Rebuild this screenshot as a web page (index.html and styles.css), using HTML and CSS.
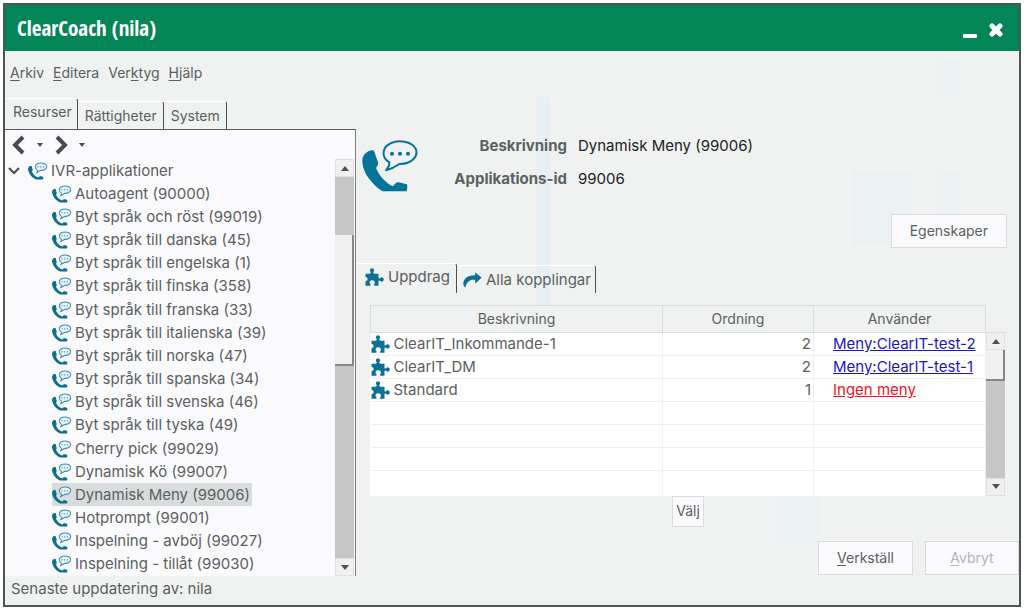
FILE: index.html
```
<!DOCTYPE html>
<html lang="sv">
<head>
<meta charset="utf-8">
<meta name="viewport" content="width=device-width, initial-scale=1">
<title>ClearCoach (nila)</title>
<link rel="stylesheet" href="styles.css">
</head>
<body>
<svg class="defs" aria-hidden="true">
  <symbol id="phone" viewBox="36 60 168 154">
    <path d="M66 90C54 92 42 100 38 112C34 134 44 160 60 178C72 194 86 206 98 213H170Q173 202 171 192L146 186Q140 185 136 190L129 198C110 190 88 168 78 142L82 136Q86 132 84 126L73 94Q71 89 66 90Z" fill="#04749a"/>
    <path d="M118 126C95 112 94 84 120 70C146 57 185 63 197 85C207 108 184 132 148 131Q130 144 108 150Q119 139 118 126Z" fill="none" stroke="#04749a" stroke-width="6" stroke-linejoin="round"/>
    <circle cx="126" cy="100" r="6" fill="#04749a"/><circle cx="150" cy="100" r="6" fill="#04749a"/><circle cx="174" cy="100" r="6" fill="#04749a"/>
  </symbol>
  <symbol id="phone-small" viewBox="0 0 56 52">
    <path d="M6 11C2 12 0 16 0 21C2 35 12 46 24 51H44Q47 47 44 43L35 41L31 45C23 43 15 36 12 28L14 24L11 12Q10 9 6 11Z" fill="#0b6f8f"/>
    <path d="M28 24C18 18 20 6 32 3C44 1 55 5 55 12C55 21 45 25 38 24L25 31Q29 28 28 24Z" fill="#e6f3f8" stroke="#3d8fae" stroke-width="3" stroke-linejoin="round"/>
    <path d="M28 14H31M36 14H39M44 14H47" stroke="#3d8fae" stroke-width="4"/>
  </symbol>
  <symbol id="puzzle" viewBox="0 0 56 54">
    <path d="M1 17H13Q17 17 17 13Q14 10 14 7Q15 1 20 1Q26 1 27 7Q27 10 24 13Q24 17 28 17H40V30Q43 33 45 30Q47 27 51 28Q56 30 56 35Q55 40 50 41Q47 41 45 38Q42 36 40 39V53H27V48Q30 45 29 41Q26 37 20 37Q14 38 13 42Q13 46 16 48V53H1V40Q5 39 7 36Q8 31 5 28Q3 27 1 27Z" fill="#0b7196"/>
  </symbol>
  <symbol id="share" viewBox="0 0 56 48">
    <path d="M36 1L55 17L36 34V24C22 22 12 27 7 46Q3 44 1 38C0 20 14 9 36 10Z" fill="#0b7196"/>
  </symbol>
</svg>
<div class="window">
  <header class="titlebar">
    <h1 class="title">ClearCoach (nila)</h1>
    <button class="win-btn" type="button" aria-label="Minimera"><svg width="14" height="22" viewBox="0 0 14 22"><rect y="17" width="14" height="4" rx="1" fill="#fff"/></svg></button>
    <button class="win-btn close" type="button" aria-label="Stäng"><svg width="14" height="14" viewBox="0 0 14 14"><path d="M3 3L11 11M11 3L3 11" stroke="#fff" stroke-width="5" stroke-linecap="round"/></svg></button>
  </header>
  <nav class="menu">
    <button type="button"><u>A</u>rkiv</button>
    <button type="button"><u>E</u>ditera</button>
    <button type="button">Ver<u>k</u>tyg</button>
    <button type="button"><u>H</u>jälp</button>
  </nav>
  <main class="main">
    <section class="left">
      <div class="tabs" role="tablist">
        <button class="tab active" type="button" role="tab" aria-selected="true">Resurser</button>
        <button class="tab" type="button" role="tab">Rättigheter</button>
        <button class="tab" type="button" role="tab">System</button>
      </div>
      <div class="panel">
        <div class="history">
          <button type="button" aria-label="Bakåt"><svg width="14" height="20" viewBox="0 0 14 20"><path d="M11 2L3 10L11 18" fill="none" stroke="#464c4c" stroke-width="4"/></svg></button>
          <button type="button" aria-label="Bakåthistorik"><svg width="6" height="4" viewBox="0 0 6 4"><path d="M0 0H6L3 4Z" fill="#464c4c"/></svg></button>
          <button type="button" aria-label="Framåt"><svg width="14" height="20" viewBox="0 0 14 20"><path d="M3 2L11 10L3 18" fill="none" stroke="#464c4c" stroke-width="4"/></svg></button>
          <button type="button" aria-label="Framåthistorik"><svg width="6" height="4" viewBox="0 0 6 4"><path d="M0 0H6L3 4Z" fill="#464c4c"/></svg></button>
        </div>
        <div class="tree-box">
          <ul class="tree">
            <li class="root"><svg class="chev" viewBox="0 0 12 8"><path d="M1 1L6 6L11 1" fill="none" stroke="#464c4c" stroke-width="2"/></svg><span class="node"><svg class="ico"><use href="#phone-small"/></svg>IVR-applikationer</span></li>
            <li><span class="node"><svg class="ico"><use href="#phone-small"/></svg>Autoagent (90000)</span></li>
            <li><span class="node"><svg class="ico"><use href="#phone-small"/></svg>Byt språk och röst (99019)</span></li>
            <li><span class="node"><svg class="ico"><use href="#phone-small"/></svg>Byt språk till danska (45)</span></li>
            <li><span class="node"><svg class="ico"><use href="#phone-small"/></svg>Byt språk till engelska (1)</span></li>
            <li><span class="node"><svg class="ico"><use href="#phone-small"/></svg>Byt språk till finska (358)</span></li>
            <li><span class="node"><svg class="ico"><use href="#phone-small"/></svg>Byt språk till franska (33)</span></li>
            <li><span class="node"><svg class="ico"><use href="#phone-small"/></svg>Byt språk till italienska (39)</span></li>
            <li><span class="node"><svg class="ico"><use href="#phone-small"/></svg>Byt språk till norska (47)</span></li>
            <li><span class="node"><svg class="ico"><use href="#phone-small"/></svg>Byt språk till spanska (34)</span></li>
            <li><span class="node"><svg class="ico"><use href="#phone-small"/></svg>Byt språk till svenska (46)</span></li>
            <li><span class="node"><svg class="ico"><use href="#phone-small"/></svg>Byt språk till tyska (49)</span></li>
            <li><span class="node"><svg class="ico"><use href="#phone-small"/></svg>Cherry pick (99029)</span></li>
            <li><span class="node"><svg class="ico"><use href="#phone-small"/></svg>Dynamisk Kö (99007)</span></li>
            <li><span class="node selected"><svg class="ico"><use href="#phone-small"/></svg>Dynamisk Meny (99006)</span></li>
            <li><span class="node"><svg class="ico"><use href="#phone-small"/></svg>Hotprompt (99001)</span></li>
            <li><span class="node"><svg class="ico"><use href="#phone-small"/></svg>Inspelning - avböj (99027)</span></li>
            <li><span class="node"><svg class="ico"><use href="#phone-small"/></svg>Inspelning - tillåt (99030)</span></li>
          </ul>
          <div class="scrollbar">
            <button type="button" aria-label="Upp"><svg width="8" height="5" viewBox="0 0 8 5"><path d="M0 5H8L4 0Z" fill="#505050"/></svg></button>
            <div class="track"><div class="before"></div><div class="thumb"></div><div class="after"></div></div>
            <button type="button" aria-label="Ned"><svg width="8" height="5" viewBox="0 0 8 5"><path d="M0 0H8L4 5Z" fill="#505050"/></svg></button>
          </div>
        </div>
      </div>
    </section>
    <section class="right">
      <div class="details">
        <svg class="big-ico"><use href="#phone"/></svg>
        <dl class="facts">
          <dt>Beskrivning</dt><dd>Dynamisk Meny (99006)</dd>
          <dt>Applikations-id</dt><dd>99006</dd>
        </dl>
      </div>
      <div class="props"><button class="btn" type="button">Egenskaper</button></div>
      <div class="tabs sub" role="tablist">
        <button class="tab active" type="button" role="tab" aria-selected="true"><svg class="ico"><use href="#puzzle"/></svg>Uppdrag</button>
        <button class="tab" type="button" role="tab"><svg class="ico"><use href="#share"/></svg>Alla kopplingar</button>
      </div>
      <div class="grid">
        <table>
          <colgroup><col class="c1"><col class="c2"><col class="c3"></colgroup>
          <thead><tr><th>Beskrivning</th><th>Ordning</th><th>Använder</th></tr></thead>
          <tbody>
            <tr><td><div class="cell"><svg class="ico"><use href="#puzzle"/></svg>ClearIT_Inkommande-1</div></td><td class="num">2</td><td class="use"><a href="#">Meny:ClearIT-test-2</a></td></tr>
            <tr><td><div class="cell"><svg class="ico"><use href="#puzzle"/></svg>ClearIT_DM</div></td><td class="num">2</td><td class="use"><a href="#">Meny:ClearIT-test-1</a></td></tr>
            <tr><td><div class="cell"><svg class="ico"><use href="#puzzle"/></svg>Standard</div></td><td class="num">1</td><td class="use"><a class="none" href="#">Ingen meny</a></td></tr>
            <tr><td></td><td></td><td></td></tr>
            <tr><td></td><td></td><td></td></tr>
            <tr><td></td><td></td><td></td></tr>
            <tr><td></td><td></td><td></td></tr>
          </tbody>
        </table>
        <div class="scrollbar short">
          <button type="button" aria-label="Upp"><svg width="8" height="5" viewBox="0 0 8 5"><path d="M0 5H8L4 0Z" fill="#505050"/></svg></button>
          <div class="track"><div class="thumb"></div><div class="after"></div></div>
          <button type="button" aria-label="Ned"><svg width="8" height="5" viewBox="0 0 8 5"><path d="M0 0H8L4 5Z" fill="#505050"/></svg></button>
        </div>
      </div>
      <div class="pick"><button class="btn small" type="button">Välj</button></div>
      <div class="actions">
        <button class="btn" type="button"><u>V</u>erkställ</button>
        <button class="btn" type="button" disabled><u>A</u>vbryt</button>
      </div>
    </section>
  </main>
  <footer class="status">Senaste uppdatering av: nila</footer>
</div>
</body>
</html>
```
FILE: styles.css
```
* { box-sizing: border-box; }
body {
  margin: 0;
  padding: 3px 3px 4px;
  min-height: 100vh;
  display: flex;
  background: #fff;
  color: #5a6060;
  font: 15px/20px Inter, "Open Sans", sans-serif;
}
button { font: inherit; color: inherit; background: none; border: 0; padding: 0; margin: 0; white-space: nowrap; }
svg { display: block; flex: none; }
u { text-underline-offset: 2px; }
.defs { position: absolute; width: 0; height: 0; }
.window {
  flex: 1;
  min-width: 0;
  display: flex;
  flex-direction: column;
  border: 2px solid #4d5656;
  background:
    linear-gradient(#ebf0f3, #ebf0f3) right 58px top 53px / 24px 38px no-repeat,
    linear-gradient(#ebf0f3, #ebf0f3) right 58px top 165px / 24px 60px no-repeat,
    linear-gradient(#ebf0f3, #ebf0f3) right 106px top 165px / 62px 76px no-repeat,
    linear-gradient(#e9f0f3, #e9f0f3) right 469px top 92px / 14px 210px no-repeat,
    linear-gradient(#ebf0f3, #ebf0f3) right 201px bottom 62px / 43px 48px no-repeat,
    #eff2f1;
}
.titlebar { display: flex; align-items: center; gap: 12px; height: 46px; padding: 0 16px 0 12px; background: #028658; }
.close { padding-top: 4px; }
.title { flex: 1; margin: 0; color: #fff; font: 400 21px/30px "Liberation Sans Narrow", "Open Sans Condensed", "DejaVu Sans Condensed", sans-serif; }
.menu { display: flex; gap: 9px; padding: 12px 5px 15px; font-size: 14px; }
.main { flex: 1; display: grid; grid-template-columns: 352fr 662fr; }
.left, .right { min-width: 0; display: flex; flex-direction: column; }
.tabs { display: flex; align-items: flex-end; height: 31px; font-size: 14px; }
.tab { height: 28px; padding: 0 6px 0 7px; border-top: 1px solid #fff; border-right: 1px solid #4a5151; border-top-right-radius: 3px; }
.tab.active { height: 31px; padding: 0 5px 4px 8px; }
.panel { flex: 1; display: flex; flex-direction: column; margin-right: 1px; border-top: 1px solid #555c5c; border-right: 1px solid #777c7c; background: #fafafc; }
.history { display: flex; align-items: center; gap: 11px; height: 29px; padding: 0 7px; }
.tree-box { flex: 1; display: flex; margin-right: 1px; }
.tree { flex: 1; display: grid; grid-auto-rows: 1fr; margin: 0; padding: 0; list-style: none; white-space: nowrap; overflow: hidden; }
.tree li { display: flex; align-items: center; padding-left: 47px; }
.tree .root { gap: 8px; padding-left: 3px; }
.chev { width: 12px; height: 8px; }
.node { display: flex; align-items: center; gap: 4px; height: 23px; padding-right: 2px; }
.selected { background: #d9dcdc; }
.ico { width: 19px; height: 18px; }
.scrollbar { width: 19px; display: flex; flex-direction: column; background: #c6c6c7; }
.scrollbar button { height: 18px; display: grid; place-items: center; background: #f0f0f0; border: 1px solid #e0e0e0; }
.track { flex: 1; display: flex; flex-direction: column; }
.before { flex: 58; }
.thumb { flex: 129; background: #f0f0f1; border-right: 2px solid #868686; border-bottom: 2px solid #868686; }
.after { flex: 193; }
.details { display: flex; align-items: flex-start; padding: 42px 0 0 5px; }
.big-ico { width: 56px; height: 52px; }
.facts { display: grid; grid-template-columns: 149px 1fr; gap: 13px 11px; margin: -4px 0 0; flex: 1; }
.facts dt { text-align: right; font-weight: 700; color: #5a6262; }
.facts dd { margin: 0; color: #222; }
.props { display: flex; justify-content: flex-end; padding: 22px 12px 15px; }
.btn { min-width: 94px; height: 34px; padding: 0 18px; font-size: 14px; background: #fafafc; border: 1px solid #d9dadd; }
.btn:disabled { color: #b3b1b8; }
.btn.small { min-width: 0; height: 31px; padding: 0 3px; }
.sub { height: 30px; font-size: 15px; }
.sub .tab { display: flex; align-items: center; gap: 4px; height: 28px; padding: 0 4px 0 6px; }
.sub .tab.active { height: 30px; padding: 0 6px 4px 8px; }
.grid { display: flex; padding: 12px 14px 0 13px; }
table { flex: 1; border-collapse: collapse; table-layout: fixed; background: #fff; }
.c1 { width: 292px; }
.c2 { width: 151px; }
.c3 { width: 172px; }
th { height: 27px; padding: 0; font-size: 14px; font-weight: 400; background: #eff2f1; border: 1px solid #d9dcdc; }
td { height: 23px; padding: 0; border-bottom: 1px solid #efefef; border-right: 1px solid #efefef; }
tbody tr:last-child td { height: 25px; border-bottom: 0; }
.cell { display: flex; align-items: center; gap: 4px; }
.num { text-align: right; padding-right: 2px; }
.use { padding-left: 19px; }
a { color: #1a16c8; }
a.none { color: #f0141e; }
.short { margin-top: 27px; }
.short .thumb { flex: 29; }
.short .after { flex: 98; }
.pick { display: flex; justify-content: center; }
.actions { display: flex; justify-content: flex-end; gap: 12px; padding-top: 14px; }
.status { padding: 3px 6px 6px; }
```
